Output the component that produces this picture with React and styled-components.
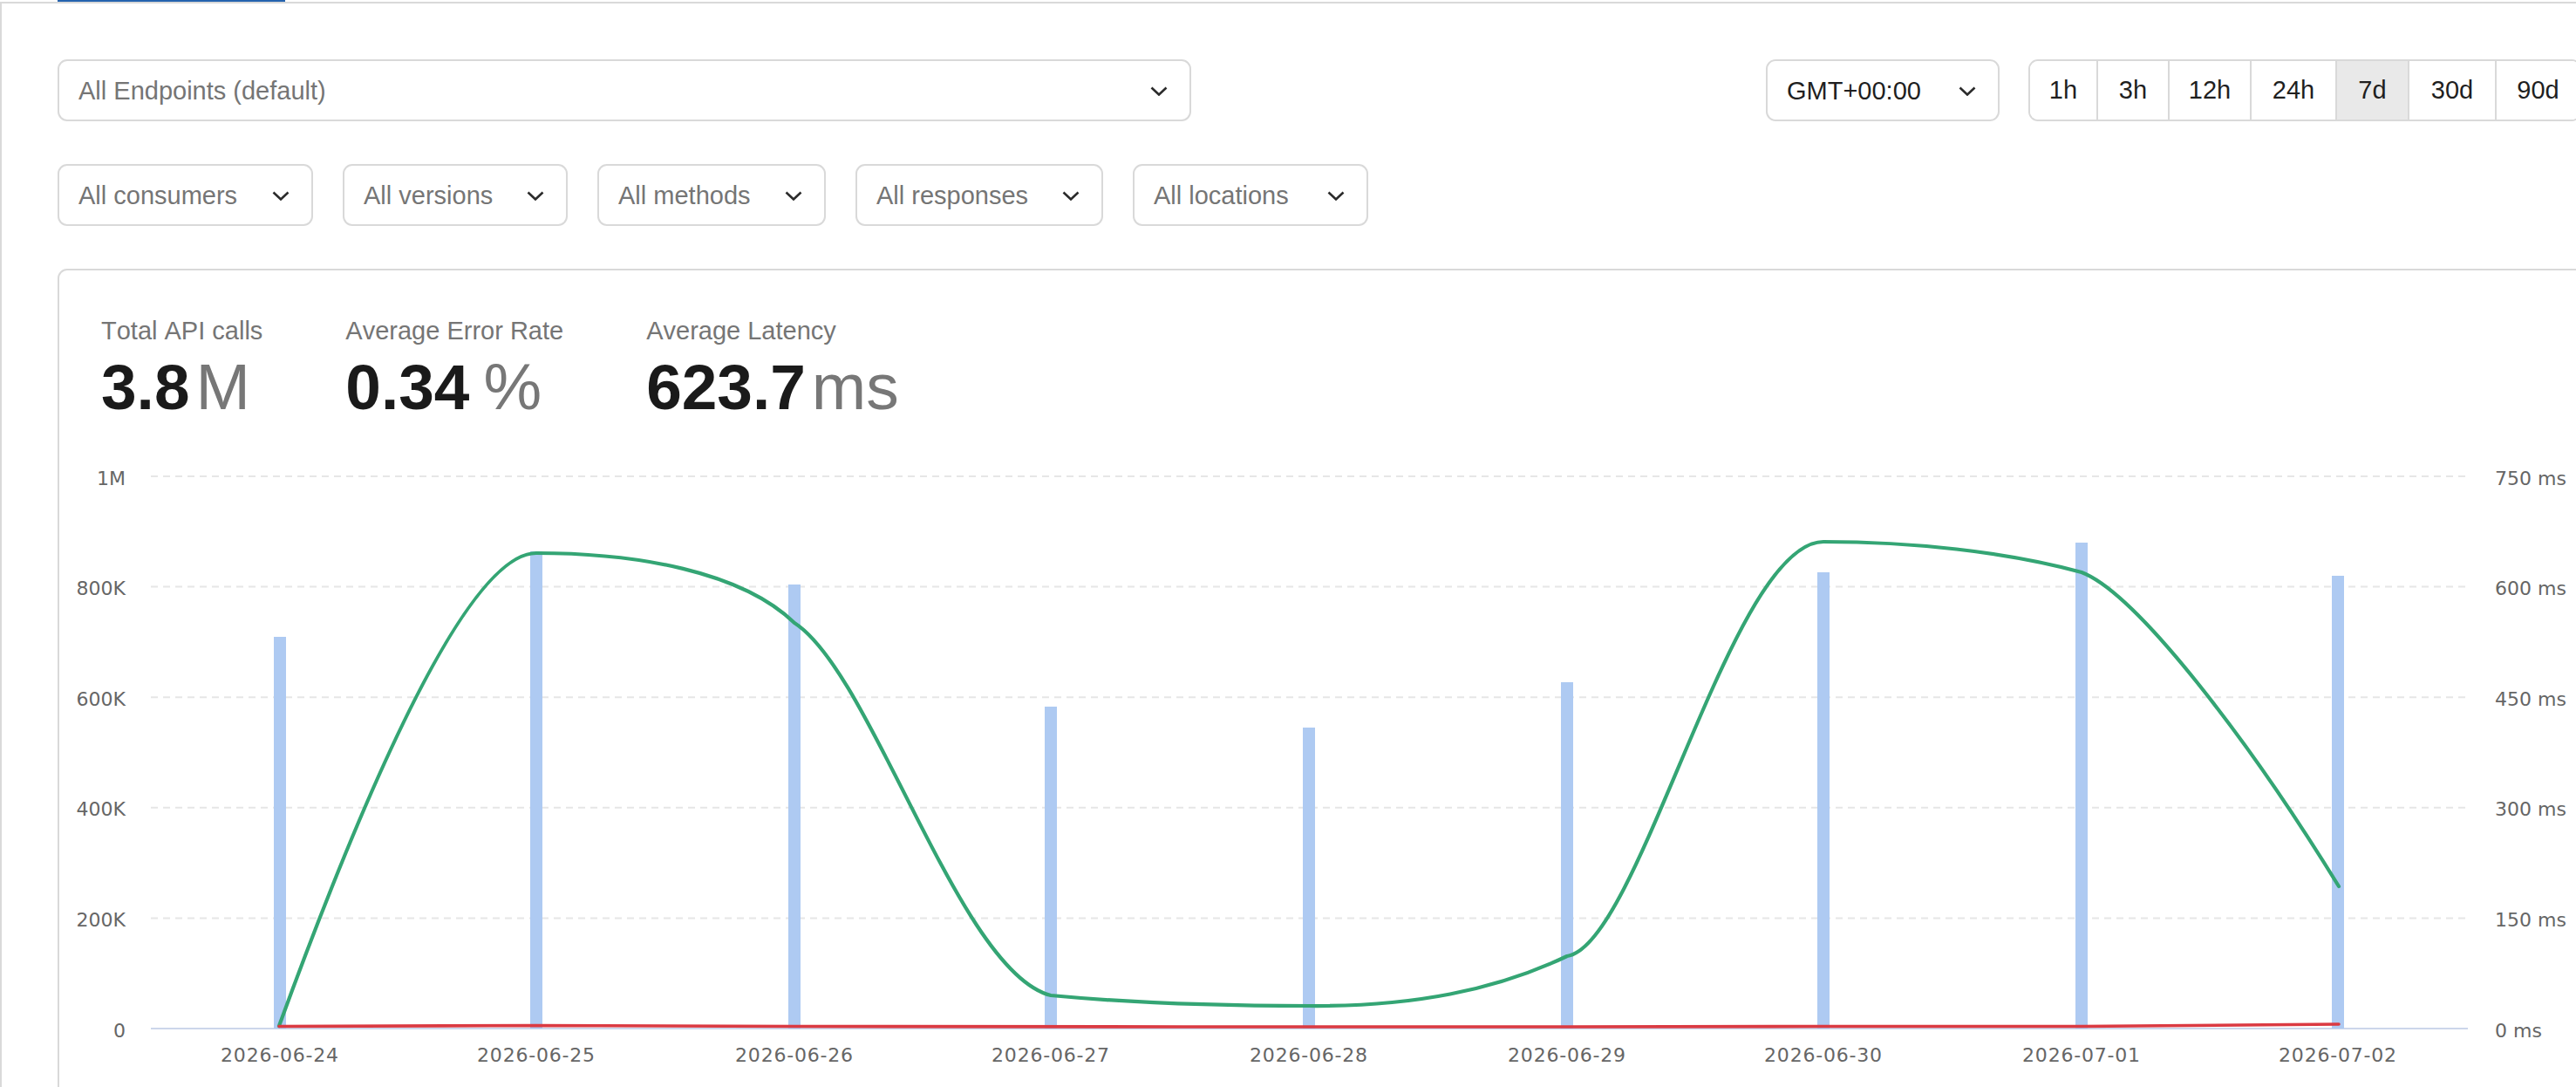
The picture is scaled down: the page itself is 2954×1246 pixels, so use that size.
import React from 'react';
import styled, { createGlobalStyle } from 'styled-components';

const GlobalStyle = createGlobalStyle`
  html, body {
    margin: 0;
    padding: 0;
    height: 100%;
    overflow: hidden;
    background: #fff;
    font-family: "Liberation Sans", Arial, sans-serif;
  }
`;

const filters = [
  { label: 'All consumers', width: 293 },
  { label: 'All versions', width: 258 },
  { label: 'All methods', width: 262 },
  { label: 'All responses', width: 284 },
  { label: 'All locations', width: 270 },
];

const ranges = ['1h', '3h', '12h', '24h', '7d', '30d', '90d'];

const stats = [
  { label: 'Total API calls', value: '3.8', unit: 'M', unitGap: 7 },
  { label: 'Average Error Rate', value: '0.34', unit: '%', unitGap: 16 },
  { label: 'Average Latency', value: '623.7', unit: 'ms', unitGap: 7 },
];

// chart coordinates below are page pixels, the svg viewBox starts at the card's inner corner
const GRID_LEFT = 173;
const GRID_RIGHT = 2830;
const ZERO_Y = 1179;
const ROW = 126.6;

const leftTicks = ['0', '200K', '400K', '600K', '800K', '1M'];
const rightTicks = ['0 ms', '150 ms', '300 ms', '450 ms', '600 ms', '750 ms'];

const bars = [
  { x: 314, top: 730, date: '2026-06-24' },
  { x: 608, top: 632, date: '2026-06-25' },
  { x: 904, top: 670, date: '2026-06-26' },
  { x: 1198, top: 810, date: '2026-06-27' },
  { x: 1494, top: 834, date: '2026-06-28' },
  { x: 1790, top: 782, date: '2026-06-29' },
  { x: 2084, top: 656, date: '2026-06-30' },
  { x: 2380, top: 622, date: '2026-07-01' },
  { x: 2674, top: 660, date: '2026-07-02' },
];

const latencyPath = [
  'M320 1176',
  'C419 905 536 634 615 634',
  'C730 634 850 655 911 714',
  'C1001 772 1100 1115 1205 1141',
  'C1300 1150 1400 1153 1501 1153',
  'C1620 1154 1715 1135 1797 1096',
  'C1880 1085 1985 621 2091 621',
  'C2190 621 2300 632 2387 656',
  'C2450 680 2580 850 2682 1016',
].join(' ');

const errorPath =
  'M320 1176.5 C420 1175.5 520 1175.5 615 1175.5 C715 1175.5 815 1176.5 911 1176.5 C1100 1177 1600 1177 1797 1177 C1900 1177 2000 1176.5 2091 1176.5 C2200 1176.5 2300 1176.5 2387 1176.5 C2490 1176.5 2590 1175 2682 1174';

const Chevron = () => (
  <ChevronIcon viewBox="0 0 20 11">
    <polyline points="1.5,1.5 10,9.5 18.5,1.5" />
  </ChevronIcon>
);

const App = () => (
  <Page>
    <GlobalStyle />
    <TabBar>
      <ActiveTab />
    </TabBar>
    <Content>
      <TopRow>
        <Select $width={1300}>
          All Endpoints (default)
          <Chevron />
        </Select>
        <RightGroup>
          <Select $width={268} $dark>
            GMT+00:00
            <Chevron />
          </Select>
          <RangeGroup>
            {ranges.map((r) => (
              <RangeCell key={r} $active={r === '7d'}>
                {r}
              </RangeCell>
            ))}
          </RangeGroup>
        </RightGroup>
      </TopRow>
      <FilterRow>
        {filters.map((f) => (
          <Select key={f.label} $width={f.width}>
            {f.label}
            <Chevron />
          </Select>
        ))}
      </FilterRow>
      <Card>
        <StatRow>
          {stats.map((s) => (
            <Stat key={s.label}>
              <StatLabel>{s.label}</StatLabel>
              <StatValue>
                {s.value}
                <StatUnit $gap={s.unitGap}>{s.unit}</StatUnit>
              </StatValue>
            </Stat>
          ))}
        </StatRow>
        <ChartSvg viewBox="68 500 2886 746">
          {leftTicks.map((t, i) => {
            const y = ZERO_Y - i * ROW;
            return (
              <g key={t}>
                {i > 0 && <GridLine x1={GRID_LEFT} x2={GRID_RIGHT} y1={y} y2={y} />}
                <AxisText x={144} y={y + 9.5} textAnchor="end">
                  {t}
                </AxisText>
                <AxisText x={2861} y={y + 9.5}>
                  {rightTicks[i]}
                </AxisText>
              </g>
            );
          })}
          <AxisLine x1={GRID_LEFT} x2={GRID_RIGHT} y1={ZERO_Y} y2={ZERO_Y} />
          {bars.map((b) => (
            <g key={b.date}>
              <Bar x={b.x} y={b.top} width={14} height={ZERO_Y - b.top} />
              <DateText x={b.x + 7} y={1217} textAnchor="middle">
                {b.date}
              </DateText>
            </g>
          ))}
          <LatencyLine d={latencyPath} />
          <ErrorLine d={errorPath} />
        </ChartSvg>
      </Card>
    </Content>
  </Page>
);

export default App;

const Page = styled.div`
  height: 1246px;
  overflow: hidden;
`;

const TabBar = styled.div`
  height: 2px;
  padding-left: 66px;
  border-bottom: 2px solid #d9d9d9;
`;

const ActiveTab = styled.div`
  width: 261px;
  height: 2px;
  background: #2563ae;
`;

const Content = styled.div`
  border-left: 2px solid #d9d9d9;
  padding: 64px 0 0 64px;
`;

const TopRow = styled.div`
  display: flex;
  justify-content: space-between;
  width: 2894px;
`;

const RightGroup = styled.div`
  display: flex;
  gap: 33px;
`;

const Select = styled.div`
  display: flex;
  align-items: center;
  justify-content: space-between;
  box-sizing: border-box;
  width: ${(p) => p.$width}px;
  height: 71px;
  padding: 1px 25px 0 22px;
  border: 2px solid #d9d9d9;
  border-radius: 11px;
  font-size: 29px;
  color: ${(p) => (p.$dark ? '#1f1f1f' : '#757575')};
  background: #fff;
`;

const ChevronIcon = styled.svg`
  width: 20px;
  height: 11px;
  fill: none;
  stroke: #2b2b2b;
  stroke-width: 2.6;
`;

const RangeGroup = styled.div`
  display: grid;
  grid-template-columns: 78px 82px 94px 98px 83px 100px 95px;
  height: 71px;
  box-sizing: border-box;
  border: 2px solid #d9d9d9;
  border-radius: 11px;
  overflow: hidden;
`;

const RangeCell = styled.div`
  display: flex;
  align-items: center;
  justify-content: center;
  font-size: 29px;
  color: #1f1f1f;
  background: ${(p) => (p.$active ? '#e9e9e9' : '#fff')};
  border-right: 2px solid #d9d9d9;

  &:last-child {
    border-right: none;
  }
`;

const FilterRow = styled.div`
  display: flex;
  gap: 34px;
  margin-top: 49px;
`;

const Card = styled.div`
  box-sizing: border-box;
  width: 2950px;
  height: 1000px;
  margin-top: 49px;
  border: 2px solid #d9d9d9;
  border-radius: 11px;
`;

const StatRow = styled.div`
  display: flex;
  gap: 95px;
  height: 190px;
  padding: 52px 0 0 48px;
  box-sizing: border-box;
`;

const Stat = styled.div`
  display: flex;
  flex-direction: column;
`;

const StatLabel = styled.div`
  font-size: 29px;
  line-height: 34px;
  font-kerning: none;
  color: #757575;
`;

const StatValue = styled.div`
  margin-top: 5px;
  font-size: 73px;
  line-height: 84px;
  font-weight: 700;
  color: #1a1a1a;
`;

const StatUnit = styled.span`
  margin-left: ${(p) => p.$gap}px;
  font-size: 75px;
  font-weight: 400;
  color: #777;
`;

const ChartSvg = styled.svg`
  display: block;
  width: 2886px;
  height: 746px;
`;

const GridLine = styled.line`
  stroke: #e6e6e6;
  stroke-width: 2;
  stroke-dasharray: 8 6;
`;

const AxisLine = styled.line`
  stroke: #ccd6eb;
  stroke-width: 2;
`;

const Bar = styled.rect`
  fill: #aecaf2;
`;

const AxisText = styled.text`
  font-family: "DejaVu Sans", sans-serif;
  font-size: 22px;
  fill: #666;
`;

const DateText = styled(AxisText)`
  letter-spacing: 0.8px;
`;

const LatencyLine = styled.path`
  fill: none;
  stroke: #34a574;
  stroke-width: 4.2;
  stroke-linecap: round;
`;

const ErrorLine = styled.path`
  fill: none;
  stroke: #db3a42;
  stroke-width: 3.6;
  stroke-linecap: round;
`;
